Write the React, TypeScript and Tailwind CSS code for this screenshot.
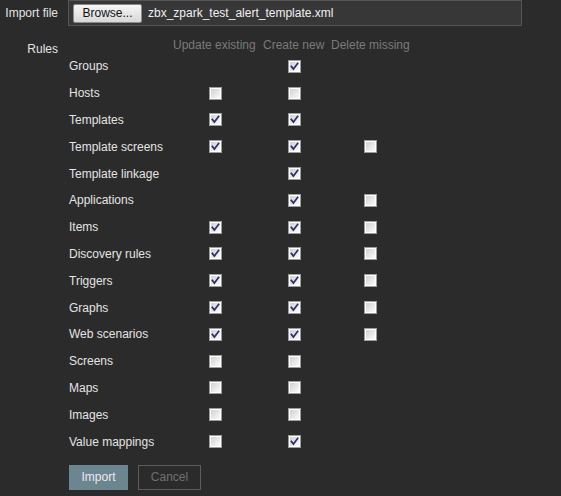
import React from "react";

type Row = { label: string; u?: boolean | null; c?: boolean | null; d?: boolean | null };

const rows: Row[] = [
  { label: "Groups", u: null, c: true, d: null },
  { label: "Hosts", u: false, c: false, d: null },
  { label: "Templates", u: true, c: true, d: null },
  { label: "Template screens", u: true, c: true, d: false },
  { label: "Template linkage", u: null, c: true, d: null },
  { label: "Applications", u: null, c: true, d: false },
  { label: "Items", u: true, c: true, d: false },
  { label: "Discovery rules", u: true, c: true, d: false },
  { label: "Triggers", u: true, c: true, d: false },
  { label: "Graphs", u: true, c: true, d: false },
  { label: "Web scenarios", u: true, c: true, d: false },
  { label: "Screens", u: false, c: false, d: null },
  { label: "Maps", u: false, c: false, d: null },
  { label: "Images", u: false, c: false, d: null },
  { label: "Value mappings", u: false, c: true, d: null },
];

function Box({ checked }: { checked: boolean }) {
  return (
    <svg width="13" height="13" viewBox="0 0 13 13" className="block">
      <defs>
        <linearGradient id={checked ? "gc" : "gu"} x1="0" y1="0" x2="1" y2="1">
          <stop offset="0" stopColor="#d0d0d6" />
          <stop offset="1" stopColor="#fbfbfb" />
        </linearGradient>
      </defs>
      <rect x="0.5" y="0.5" width="12" height="12" fill="#ffffff" stroke="#9c9c9c" />
      <rect x="2" y="2" width="9" height="9" fill={`url(#${checked ? "gc" : "gu"})`} />
      {checked && (
        <path d="M3.3 6.4 L5.4 9 L9.6 3.4" fill="none" stroke="#2b2f6e" strokeWidth="1.7" strokeLinecap="square" />
      )}
    </svg>
  );
}

function Cell({ v, w }: { v?: boolean | null; w: string }) {
  return (
    <div className={`${w} flex justify-center items-center`}>
      {v === null || v === undefined ? null : <Box checked={v} />}
    </div>
  );
}

export default function App() {
  return (
    <div
      className="w-[561px] h-[496px] bg-[#2b2b2b] text-[12px] text-[#e4e4e4] overflow-hidden"
      style={{ fontFamily: '"Liberation Sans", Arial, sans-serif' }}
    >
      <div className="flex items-center h-[26px]">
        <div className="w-[58px] text-right whitespace-nowrap">Import file</div>
        <div className="ml-[10px] w-[454px] h-[26px] bg-[#373737] border border-[#555555] flex items-center">
          <div className="ml-[4px] w-[69px] h-[19px] rounded-[2px] border border-[#8c8c8c] bg-gradient-to-b from-[#f6f6f6] to-[#d8d8d8] text-[#111] flex items-center justify-center">
            Browse...
          </div>
          <div className="ml-[6px] text-[#f0f0f0]">zbx_zpark_test_alert_template.xml</div>
        </div>
      </div>

      <div className="flex mt-[10px]">
        <div className="w-[58px] text-right pt-[4px]">Rules</div>
        <div className="ml-[11px]">
          <div className="flex h-[17px] items-center text-[#7a7a7a] whitespace-nowrap">
            <div className="w-[104px]" />
            <div className="w-[90px]">Update existing</div>
            <div className="w-[68px]">Create new</div>
            <div className="w-[84px]">Delete missing</div>
          </div>
          {rows.map((r) => (
            <div key={r.label} className="flex h-[26.8px] items-center whitespace-nowrap">
              <div className="w-[104px]">{r.label}</div>
              <div className="w-[90px] flex">
                <Cell v={r.u} w="w-[85px]" />
              </div>
              <div className="w-[68px] flex">
                <Cell v={r.c} w="w-[63px]" />
              </div>
              <div className="w-[84px] flex">
                <Cell v={r.d} w="w-[79px]" />
              </div>
            </div>
          ))}
          <div className="flex gap-[10px] mt-[10px]">
            <div className="w-[59px] h-[25px] bg-[#6b8591] text-[#ececec] flex items-center justify-center">
              Import
            </div>
            <div className="w-[63px] h-[25px] border border-[#5c5c5c] text-[#707070] flex items-center justify-center">
              Cancel
            </div>
          </div>
        </div>
      </div>
    </div>
  );
}
